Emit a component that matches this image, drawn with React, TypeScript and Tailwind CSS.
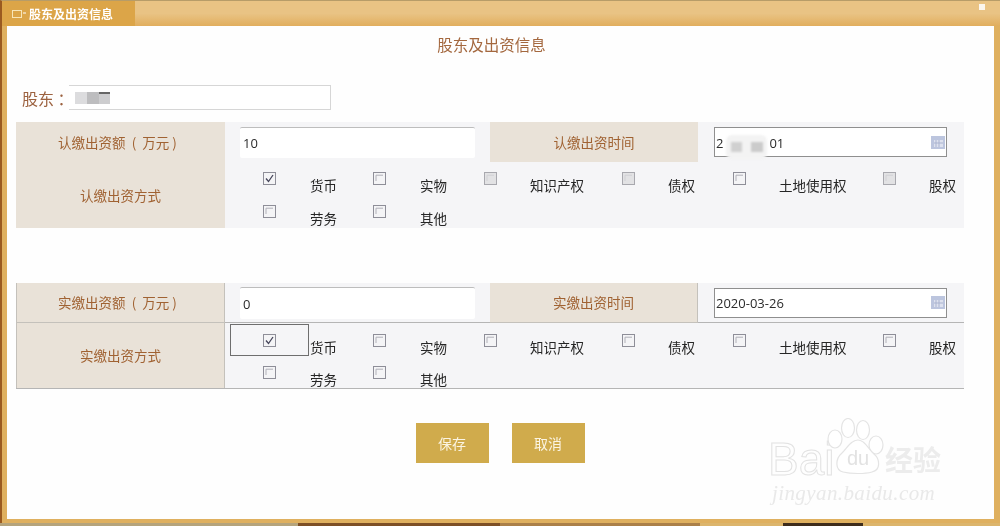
import React from "react";

const cjk = "font-['Noto_Sans_CJK_SC','Noto_Sans',sans-serif]";

function Box({ checked, filled }: { checked?: boolean; filled?: boolean }) {
  return (
    <svg width="13" height="13" viewBox="0 0 13 13" className="shrink-0">
      <rect x="0.5" y="0.5" width="12" height="12" fill={filled ? "#e2e2e4" : "#f4f4f6"} stroke={filled ? "#a8a8ae" : "#8e8e98"} />
      {!checked && <path d="M3 9V3.2H10" fill="none" stroke={filled ? "#d0d0d4" : "#b0b0b8"} />}
      {checked && <path d="M3 6.5L5.5 9.5L10 3" fill="none" stroke="#45455a" strokeWidth="1.3" />}
    </svg>
  );
}

const items = [
  { label: "货币", w: "w-[110px]", gap: "w-[34px]" },
  { label: "实物", w: "w-[111px]", gap: "w-[34px]" },
  { label: "知识产权", w: "w-[138px]", gap: "w-[33px]" },
  { label: "债权", w: "w-[111px]", gap: "w-[33px]" },
  { label: "土地使用权", w: "w-[150px]", gap: "w-[33px]" },
  { label: "股权", w: "w-[81px]", gap: "w-[33px]" },
  { label: "劳务", w: "w-[110px]", gap: "w-[34px]" },
  { label: "其他", w: "w-[111px]", gap: "w-[34px]" },
];

function Options({ focus, rowH, filled, top }: { focus?: boolean; rowH: string; filled?: boolean; top: string }) {
  return (
    <div className={`flex flex-wrap pl-[38px] bg-[#f5f5f7] h-full content-start ${top}`}>
      {items.map((it, i) => (
        <div key={it.label} className={`relative flex items-start ${it.w} ${rowH}`}>
          <Box checked={i === 0} filled={filled && (i === 2 || i === 3 || i === 5)} />
          {focus && i === 0 && (
            <div className="absolute left-[-33px] top-[-10px] w-[79px] h-[32px] border border-[#6e6e6e]" />
          )}
          <div className={it.gap} />
          <span className={`text-[13.5px] leading-[16px] mt-[5px] text-[#262626] whitespace-nowrap ${cjk}`}>
            {it.label}
          </span>
        </div>
      ))}
    </div>
  );
}

function Label({ text, line, right, left }: { text: string; line?: boolean; right?: boolean; left?: boolean }) {
  return (
    <div
      className={`flex items-center justify-center bg-[#e9e2d8] text-[13.5px] text-[#a06232] whitespace-pre ${cjk} ${
        line ? "border-b border-[#b5b1aa]" : ""
      } ${right ? "border-r border-[#c4c1bb]" : ""} ${left ? "border-l border-[#c4c1bb]" : ""}`}
    >
      {text}
    </div>
  );
}

function Calendar() {
  return (
    <svg width="14" height="13" viewBox="0 0 14 13" className="shrink-0 mt-[-3px]">
      <rect width="14" height="13" fill="#bcc5de" />
      <rect x="3" y="4" width="9" height="7" fill="#dde1ee" />
      <path d="M5 4v7M8 4v7M3 7h9" stroke="#aab3cf" />
    </svg>
  );
}

function Section({
  amountLabel,
  timeLabel,
  methodLabel,
  amount,
  date,
  second,
}: {
  amountLabel: string;
  timeLabel: string;
  methodLabel: string;
  amount: string;
  date: React.ReactNode;
  second?: boolean;
}) {
  return (
    <div
      className={`w-[948px] grid grid-cols-[209px_265px_208px_266px] ${
        second ? "grid-rows-[40px_65px] border-b border-[#b5b5b5]" : "grid-rows-[40px_66px]"
      }`}
    >
      <Label text={amountLabel} line={second} right={second} left={second} />
      <div className={`bg-[#f5f5f7] flex items-center pl-[15px] ${second ? "border-b border-[#b5b5b5]" : ""}`}>
        <div
          className={`w-[235px] bg-white rounded-[2px] border-t border-[#bdbdbd] flex items-center pl-[3px] pt-[3px] text-[13px] text-[#2b2b2b] font-['Open_Sans',sans-serif] ${
            second ? "h-[32px]" : "h-[31px]"
          }`}
        >
          {amount}
        </div>
      </div>
      <Label text={timeLabel} line={second} right={second} />
      <div className={`bg-[#f5f5f7] flex items-center pl-[16px] ${second ? "border-b border-[#b5b5b5]" : ""}`}>
        <div className="relative w-[233px] h-[30px] bg-white border border-[#8f8f8f] flex items-center justify-between pl-[1px] pr-[1px] pt-[3px] text-[13px] text-[#2b2b2b] font-['Open_Sans',sans-serif]">
          {date}
          <Calendar />
        </div>
      </div>
      <Label text={methodLabel} right={second} left={second} />
      <div className="col-span-3">
        <Options
          focus={second}
          rowH={second ? "h-[32px]" : "h-[33px]"}
          filled={!second}
          top={second ? "pt-[11px]" : "pt-[10px]"}
        />
      </div>
    </div>
  );
}

function Watermark() {
  return (
    <div className="absolute left-[761px] top-[394px] w-[190px] h-[90px] pointer-events-none">
      <span className="absolute left-0 top-[11px] text-[46px] leading-[56px] font-['Liberation_Sans',sans-serif] text-transparent [-webkit-text-stroke:1px_#e2e2e2]">
        Bai
      </span>
      <svg width="64" height="60" viewBox="0 0 64 60" className="absolute left-[57px] top-[-2px]" fill="#fff" stroke="#e4e4e4" strokeWidth="1.2">
        <ellipse cx="10" cy="21" rx="7" ry="9" />
        <ellipse cx="23" cy="10" rx="6.5" ry="9.5" />
        <ellipse cx="38" cy="12" rx="6.5" ry="9.5" />
        <ellipse cx="51" cy="27" rx="7" ry="9" />
        <path d="M33 22C26 22 22 30 17 35C10 41 10 52 18 54C26 56 40 56 47 54C56 52 55 41 49 36C43 31 40 22 33 22Z" />
        <text x="22" y="47" fontSize="20" fill="#e2e2e2" stroke="none" fontFamily="Liberation Sans, sans-serif">du</text>
      </svg>
      <span className={`absolute left-[117px] top-[19px] text-[28px] leading-[40px] font-bold whitespace-nowrap text-[#ececec] ${cjk}`}>
        经验
      </span>
      <span className="absolute left-[4px] top-[60px] text-[21px] leading-[26px] italic text-[#e9e9e9] whitespace-nowrap font-['Liberation_Serif',serif] tracking-[0.4px]">
        jingyan.baidu.com
      </span>
    </div>
  );
}

export default function App() {
  return (
    <div className="relative w-[1000px] h-[526px] overflow-hidden flex flex-col bg-[#cdb98f] blur-[0.35px]">
      <div className="h-[523px] flex flex-col shrink-0 bg-[#dfb05f] border-l-2 border-l-[#9a5a20] border-t border-t-[#b79c68]">
        <div className="h-[25px] flex shrink-0 bg-[linear-gradient(#e9c384_0%,#e9c384_50%,#e1ae5e_100%)]">
          <div className="w-[133px] h-full bg-[#dca548] flex items-center pl-[10px] gap-[3px] text-white">
            <svg width="14" height="8" viewBox="0 0 14 8">
              <rect x="0.5" y="0.5" width="9" height="7" fill="none" stroke="#f8e6b8" />
              <path d="M11 3h3" stroke="#fff" />
            </svg>
            <span className={`text-[12px] leading-none font-bold whitespace-nowrap ${cjk}`}>股东及出资信息</span>
          </div>
          <div className="flex-1" />
          <div className="w-[6px] h-[6px] bg-[#fbf6ee] mt-[3px] mr-[15px]" />
        </div>
        <div className="ml-[5px] mr-[6px] h-[493px] bg-[#fefefe] flex flex-col pl-[9px] relative">
          <div className={`h-[38px] shrink-0 flex items-center justify-center pr-[27px] text-[15.5px] text-[#a4683f] ${cjk}`}>
            股东及出资信息
          </div>
          <div className="mt-[21px] h-[25px] flex items-center shrink-0">
            <span className={`w-[53px] pl-[6px] whitespace-pre text-[16px] text-[#9c6240] ${cjk}`}>股东 ：</span>
            <div className="w-[262px] h-[25px] border-t border-r border-b border-[#d6d6d6] bg-white flex items-center pl-[6px]">
              <div className="w-[12px] h-[12px] bg-[#dcdcde]" />
              <div className="w-[12px] h-[12px] bg-[#bdbdbf]" />
              <div className="w-[11px] h-[12px] bg-[#cdcdcf] border-t-2 border-t-[#666]" />
            </div>
          </div>
          <div className="mt-[12px] shrink-0">
            <Section
              amountLabel={"认缴出资额\u00a0\u00a0(\u00a0\u00a0万元\u00a0)\u00a0\u00a0"}
              timeLabel="认缴出资时间"
              methodLabel="认缴出资方式"
              amount="10"
              date={
                <div className="flex items-center">
                  <span>2</span>
                  <div className="relative w-[46px] h-[20px]">
                    <div className="absolute left-[3px] top-[1px] w-[41px] h-[24px] bg-[#f3f3f3] rounded-[6px] flex items-center justify-center gap-[9px] blur-[1px]">
                      <div className="w-[11px] h-[10px] bg-[#d0d0d0]" />
                      <div className="w-[12px] h-[10px] bg-[#cbcbcb]" />
                    </div>
                  </div>
                  <span>01</span>
                </div>
              }
            />
          </div>
          <div className="mt-[55px] shrink-0">
            <Section
              second
              amountLabel={"实缴出资额\u00a0\u00a0(\u00a0\u00a0万元\u00a0)\u00a0\u00a0"}
              timeLabel="实缴出资时间"
              methodLabel="实缴出资方式"
              amount="0"
              date={<span>2020-03-26</span>}
            />
          </div>
          <div className="mt-[34px] flex justify-center gap-[23px] shrink-0 w-[968px]">
            <button className={`w-[73px] h-[40px] bg-[#d0ab4c] text-[#fbf4e2] text-[14px] ${cjk}`}>保存</button>
            <button className={`w-[73px] h-[40px] bg-[#d0ab4c] text-[#fbf4e2] text-[14px] ${cjk}`}>取消</button>
          </div>
          <Watermark />
        </div>
        <div className="flex-1" />
      </div>
      <div className="flex-1 flex">
        <div className="w-[298px] bg-[#b5a47c]" />
        <div className="w-[202px] bg-[#7d4f26]" />
        <div className="w-[200px] bg-[#ab8049]" />
        <div className="w-[83px] bg-[#dcb56c]" />
        <div className="w-[80px] bg-[#3e2c1b]" />
        <div className="flex-1 bg-[#dcb56c]" />
      </div>
    </div>
  );
}
